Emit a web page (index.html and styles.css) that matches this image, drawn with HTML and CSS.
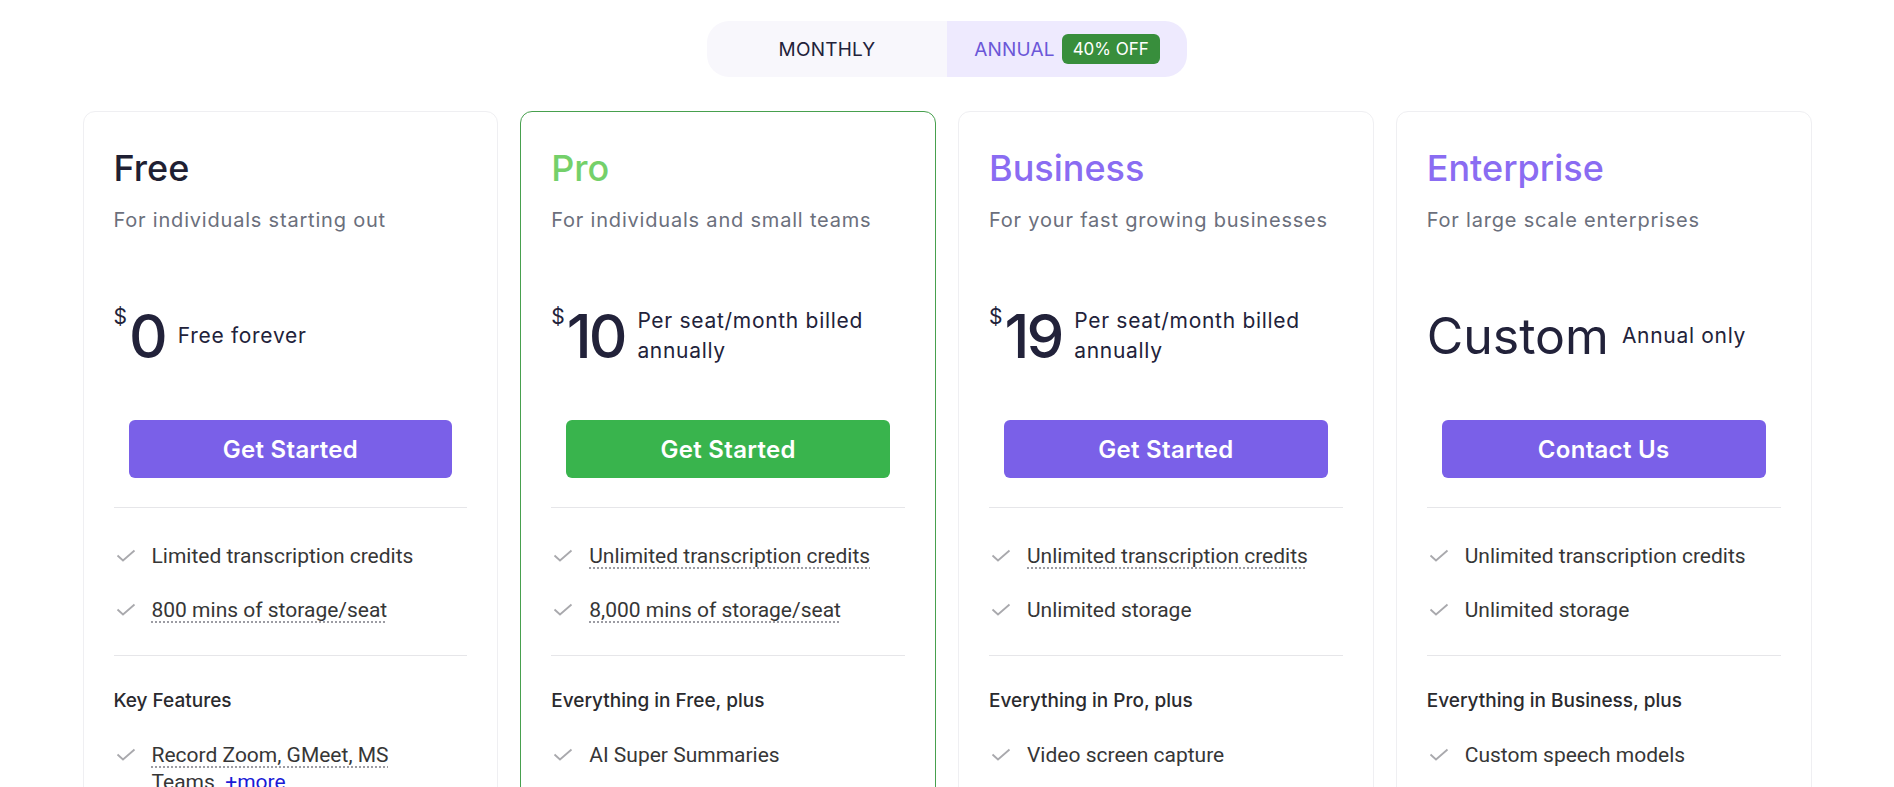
FILE: index.html
```html
<!DOCTYPE html>
<html lang="en">
<head>
<meta charset="utf-8">
<title>Pricing</title>
<link rel="stylesheet" href="styles.css">
</head>
<body>
<main class="pricing">
  <div class="toggle">
    <button class="toggle-opt toggle-monthly" type="button">MONTHLY</button>
    <button class="toggle-opt toggle-annual" type="button">ANNUAL <span class="badge">40% OFF</span></button>
  </div>

  <div class="plans">
    <article class="plan">
      <h2 class="plan-name name-dark">Free</h2>
      <p class="plan-tagline">For individuals starting out</p>
      <div class="price">
        <div class="price-figure"><span class="currency">$</span><span class="amount">0</span></div>
        <span class="price-note">Free forever</span>
      </div>
      <a class="cta cta-purple" href="#">Get Started</a>
      <ul class="features features-main">
        <li><svg class="check" viewBox="0 0 20 13"><polyline points="1.5,6.5 7,11.5 18.5,1.5"/></svg><span>Limited transcription credits</span></li>
        <li><svg class="check" viewBox="0 0 20 13"><polyline points="1.5,6.5 7,11.5 18.5,1.5"/></svg><span><span class="hint">800 mins of storage/seat</span></span></li>
      </ul>
      <h3 class="section-title">Key Features</h3>
      <ul class="features">
        <li><svg class="check" viewBox="0 0 20 13"><polyline points="1.5,6.5 7,11.5 18.5,1.5"/></svg><span class="feature-text"><span class="hint">Record Zoom, GMeet, MS Teams</span>&nbsp; <a class="more" href="#">+more</a></span></li>
      </ul>
    </article>

    <article class="plan plan-featured">
      <h2 class="plan-name name-green">Pro</h2>
      <p class="plan-tagline">For individuals and small teams</p>
      <div class="price">
        <div class="price-figure"><span class="currency">$</span><span class="amount">10</span></div>
        <span class="price-note">Per seat/month billed annually</span>
      </div>
      <a class="cta cta-green" href="#">Get Started</a>
      <ul class="features features-main">
        <li><svg class="check" viewBox="0 0 20 13"><polyline points="1.5,6.5 7,11.5 18.5,1.5"/></svg><span><span class="hint">Unlimited transcription credits</span></span></li>
        <li><svg class="check" viewBox="0 0 20 13"><polyline points="1.5,6.5 7,11.5 18.5,1.5"/></svg><span><span class="hint">8,000 mins of storage/seat</span></span></li>
      </ul>
      <h3 class="section-title">Everything in Free, plus</h3>
      <ul class="features">
        <li><svg class="check" viewBox="0 0 20 13"><polyline points="1.5,6.5 7,11.5 18.5,1.5"/></svg><span>AI Super Summaries</span></li>
      </ul>
    </article>

    <article class="plan">
      <h2 class="plan-name name-purple">Business</h2>
      <p class="plan-tagline">For your fast growing businesses</p>
      <div class="price">
        <div class="price-figure"><span class="currency">$</span><span class="amount">19</span></div>
        <span class="price-note">Per seat/month billed annually</span>
      </div>
      <a class="cta cta-purple" href="#">Get Started</a>
      <ul class="features features-main">
        <li><svg class="check" viewBox="0 0 20 13"><polyline points="1.5,6.5 7,11.5 18.5,1.5"/></svg><span><span class="hint">Unlimited transcription credits</span></span></li>
        <li><svg class="check" viewBox="0 0 20 13"><polyline points="1.5,6.5 7,11.5 18.5,1.5"/></svg><span>Unlimited storage</span></li>
      </ul>
      <h3 class="section-title">Everything in Pro, plus</h3>
      <ul class="features">
        <li><svg class="check" viewBox="0 0 20 13"><polyline points="1.5,6.5 7,11.5 18.5,1.5"/></svg><span>Video screen capture</span></li>
      </ul>
    </article>

    <article class="plan">
      <h2 class="plan-name name-purple">Enterprise</h2>
      <p class="plan-tagline">For large scale enterprises</p>
      <div class="price">
        <div class="price-figure"><span class="amount amount-custom">Custom</span></div>
        <span class="price-note">Annual only</span>
      </div>
      <a class="cta cta-purple" href="#">Contact Us</a>
      <ul class="features features-main">
        <li><svg class="check" viewBox="0 0 20 13"><polyline points="1.5,6.5 7,11.5 18.5,1.5"/></svg><span>Unlimited transcription credits</span></li>
        <li><svg class="check" viewBox="0 0 20 13"><polyline points="1.5,6.5 7,11.5 18.5,1.5"/></svg><span>Unlimited storage</span></li>
      </ul>
      <h3 class="section-title">Everything in Business, plus</h3>
      <ul class="features">
        <li><svg class="check" viewBox="0 0 20 13"><polyline points="1.5,6.5 7,11.5 18.5,1.5"/></svg><span>Custom speech models</span></li>
      </ul>
    </article>
  </div>
</main>
</body>
</html>
```

FILE: styles.css
```css
html, body {
  margin: 0;
  padding: 0;
  background: #ffffff;
  overflow: hidden;
}

body {
  font-family: "Inter", "Noto Sans", sans-serif;
  color: #1f1f33;
}

.pricing {
  padding-top: 21px;
}

/* billing toggle */
.toggle {
  display: flex;
  width: 480px;
  height: 56px;
  margin: 0 auto;
  border-radius: 22px;
  overflow: hidden;
}

.toggle-opt {
  flex: 1;
  display: flex;
  align-items: center;
  justify-content: center;
  gap: 7px;
  border: 0;
  margin: 0;
  padding: 0;
  font-family: "Inter", sans-serif;
  font-size: 19px;
  font-weight: 400;
  letter-spacing: 0.2px;
  cursor: pointer;
}

.toggle-monthly {
  background: #f8f7fc;
  color: #22223a;
}

.toggle-annual {
  background: #eeeafe;
  color: #6b57d8;
}

.badge {
  display: inline-flex;
  align-items: center;
  justify-content: center;
  width: 98px;
  height: 30px;
  border-radius: 6px;
  background: #388e3c;
  color: #ffffff;
  font-size: 17px;
  letter-spacing: 0;
}

/* plan cards */
.plans {
  display: grid;
  grid-template-columns: repeat(4, 1fr);
  gap: 22px;
  max-width: 1729px;
  margin: 34px auto 0;
}

.plan {
  border: 1px solid #efeff2;
  border-radius: 12px;
  padding: 35px 30px 30px;
  background: #ffffff;
}

.plan-featured {
  border-color: #47a04e;
}

.plan-name {
  margin: 0;
  font-size: 36px;
  line-height: 43px;
  font-weight: 500;
  letter-spacing: 0;
}

.name-dark { color: #1f1f33; }
.name-green { color: #74d06a; }
.name-purple { color: #8a6cf2; }

.plan-tagline {
  margin: 17px 0 0;
  font-size: 20px;
  line-height: 27px;
  color: #6b6f7c;
  letter-spacing: 0.8px;
}

.price {
  display: flex;
  align-items: center;
  gap: 13px;
  height: 64px;
  margin-top: 70px;
}

.price-figure {
  display: flex;
  align-items: flex-start;
}

.currency {
  font-size: 21px;
  line-height: 22px;
  margin-top: 2px;
  margin-right: 2px;
  color: #22223a;
}

.amount {
  font-size: 60px;
  line-height: 64px;
  font-weight: 500;
  color: #22223a;
  letter-spacing: -3px;
}

.amount-custom {
  font-size: 50px;
  font-weight: 400;
  letter-spacing: 0;
}

.price-note {
  font-size: 21px;
  line-height: 30px;
  color: #22223a;
  letter-spacing: 0.7px;
  max-width: 240px;
}

.cta {
  display: flex;
  align-items: center;
  justify-content: center;
  height: 58px;
  margin: 52px 15px 0;
  border-radius: 6px;
  color: #ffffff;
  text-decoration: none;
  font-size: 24px;
  font-weight: 600;
  letter-spacing: 0.3px;
}

.cta-purple { background: #7a60e8; }
.cta-green { background: #39b44d; }

.features {
  list-style: none;
  margin: 0;
  padding: 0;
  display: flex;
  flex-direction: column;
  gap: 27px;
  font-family: "Roboto", sans-serif;
  font-size: 21px;
  line-height: 27px;
  color: #363636;
}

.features-main {
  margin-top: 29px;
  padding: 35px 0 31px;
  border-top: 1px solid #e6e6e9;
  border-bottom: 1px solid #e6e6e9;
}

.features li {
  display: flex;
  align-items: flex-start;
  gap: 16px;
  padding-right: 26px;
}

.feature-text {
  display: block;
}

.check {
  flex: none;
  width: 20px;
  height: 13px;
  margin-top: 6px;
  margin-left: 2px;
  fill: none;
  stroke: #a9a9ad;
  stroke-width: 1.8;
}

.hint {
  text-decoration: underline dotted #9c9ca3;
  text-decoration-thickness: 2px;
  text-underline-offset: 4px;
}

.more {
  color: #1a1ad6;
  text-decoration: none;
}

.section-title {
  margin: 31px 0 27px;
  font-size: 19px;
  line-height: 28px;
  font-weight: 500;
  color: #2a2a2e;
}
```
